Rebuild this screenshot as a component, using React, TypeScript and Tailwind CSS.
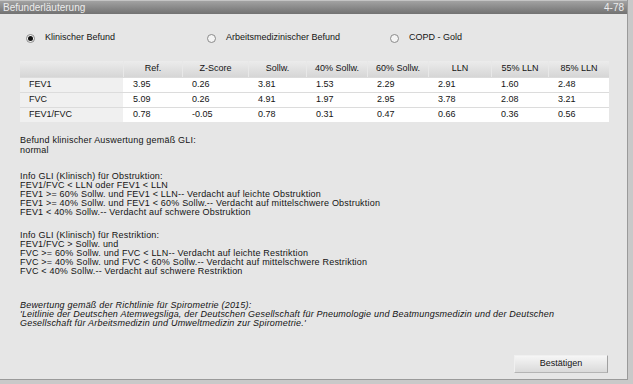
import React from "react";

const columns = [
  { label: "", width: "w-[103px]" },
  { label: "Ref.", width: "w-[59px]" },
  { label: "Z-Score", width: "w-[66px]" },
  { label: "Sollw.", width: "w-[58px]" },
  { label: "40% Sollw.", width: "w-[61px]" },
  { label: "60% Sollw.", width: "w-[61px]" },
  { label: "LLN", width: "w-[63px]" },
  { label: "55% LLN", width: "w-[57px]" },
  { label: "85% LLN", width: "w-[61px]" },
];

const rows = [
  ["FEV1", "3.95", "0.26", "3.81", "1.53", "2.29", "2.91", "1.60", "2.48"],
  ["FVC", "5.09", "0.26", "4.91", "1.97", "2.95", "3.78", "2.08", "3.21"],
  ["FEV1/FVC", "0.78", "-0.05", "0.78", "0.31", "0.47", "0.66", "0.36", "0.56"],
];

const obstruktion = [
  "Info GLI (Klinisch) für Obstruktion:",
  "FEV1/FVC < LLN oder FEV1 < LLN",
  "FEV1 >= 60% Sollw. und FEV1 < LLN-- Verdacht auf leichte Obstruktion",
  "FEV1 >= 40% Sollw. und FEV1 < 60% Sollw.-- Verdacht auf mittelschwere Obstruktion",
  "FEV1 < 40% Sollw.-- Verdacht auf schwere Obstruktion",
];

const restriktion = [
  "Info GLI (Klinisch) für Restriktion:",
  "FEV1/FVC > Sollw. und",
  "FVC >= 60% Sollw. und FVC < LLN-- Verdacht auf leichte Restriktion",
  "FVC >= 40% Sollw. und FVC < 60% Sollw.-- Verdacht auf mittelschwere Restriktion",
  "FVC < 40% Sollw.-- Verdacht auf schwere Restriktion",
];

const Radio: React.FC<{ label: string; checked?: boolean; width: string }> = ({ label, checked, width }) => (
  <div className={`flex items-center gap-[10px] ${width}`}>
    <span className="w-[9px] h-[9px] rounded-full border border-[#8a8a8a] bg-[#f4f4f4] flex items-center justify-center">
      {checked && <span className="w-[5px] h-[5px] rounded-full bg-[#111]" />}
    </span>
    <span>{label}</span>
  </div>
);

const App: React.FC = () => {
  return (
    <div className="w-[633px] h-[384px] bg-[#c9c9c9] font-['Liberation_Sans',Arial,sans-serif] text-[#141414]">
      <div className="w-[628px] h-[380px] bg-[#e6e6e6] border-r border-b border-[#9a9a9a] flex flex-col">
        <div className="h-[14px] flex items-center justify-between px-[3px] bg-gradient-to-b from-[#a2a2a2] to-[#727272] border-t border-[#c4c4c4] text-[10px] text-[#ececec]">
          <span>Befunderläuterung</span>
          <span>4-78</span>
        </div>

        <div className="mt-[17px] h-[14px] flex items-center pl-[26px] text-[9px]">
          <Radio label="Klinischer Befund" checked width="w-[181px]" />
          <Radio label="Arbeitsmedizinischer Befund" width="w-[183px]" />
          <Radio label="COPD - Gold" width="w-[150px]" />
        </div>

        <div className="mt-[16px] ml-[20px] w-[589px] text-[9px]">
          <div className="flex h-[16px] bg-gradient-to-b from-[#ececec] to-[#d6d6d6]">
            {columns.map((c, i) => (
              <div
                key={i}
                className={`${c.width} flex items-center justify-center ${i > 0 ? "border-l border-[#e8e8e8]" : ""}`}
              >
                {c.label}
              </div>
            ))}
          </div>
          {rows.map((r, ri) => (
            <div key={ri} className="flex h-[15px] border-t border-[#dcdcdc] bg-white">
              {r.map((cell, ci) => (
                <div
                  key={ci}
                  className={`${columns[ci].width} flex items-center ${
                    ci === 0 ? "pl-[9px] bg-[#f0f0f0]" : "pl-[10px]"
                  }`}
                >
                  {cell}
                </div>
              ))}
            </div>
          ))}
        </div>

        <div className="px-[20px] text-[9px] leading-[9px] tracking-[0.2px]">
          <div className="mt-[14px]">
            <p>Befund klinischer Auswertung gemäß GLI:</p>
            <p className="mt-[1px]">normal</p>
          </div>
          <div className="mt-[17px]">
            {obstruktion.map((l, i) => (
              <p key={i}>{l}</p>
            ))}
          </div>
          <div className="mt-[14px]">
            {restriktion.map((l, i) => (
              <p key={i}>{l}</p>
            ))}
          </div>
          <div className="mt-[25px] italic">
            <p>Bewertung gemäß der Richtlinie für Spirometrie (2015):</p>
            <p>'Leitlinie der Deutschen Atemwegsliga, der Deutschen Gesellschaft für Pneumologie und Beatmungsmedizin und der Deutschen</p>
            <p>Gesellschaft für Arbeitsmedizin und Umweltmedizin zur Spirometrie.'</p>
          </div>
        </div>

        <div className="flex-1" />
        <div className="flex justify-end pr-[19px] mb-[6px]">
          <button className="w-[94px] h-[18px] text-[9px] bg-gradient-to-b from-[#f6f6f6] to-[#dadada] border border-t-[#f0f0f0] border-l-[#f0f0f0] border-r-[#a0a0a0] border-b-[#b4b4b4]">
            Bestätigen
          </button>
        </div>
      </div>
    </div>
  );
};

export default App;
